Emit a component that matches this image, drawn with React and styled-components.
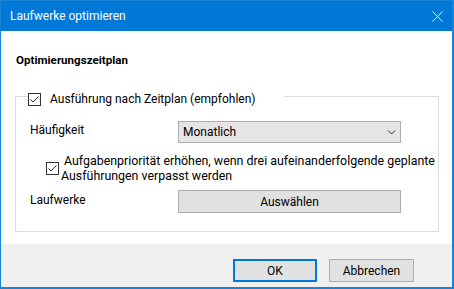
import React from 'react'
import styled, { createGlobalStyle } from 'styled-components'

const GlobalStyle = createGlobalStyle`
  html, body {
    margin: 0;
    padding: 0;
    background: #ffffff;
  }
  body {
    font-family: Roboto, "Noto Sans", sans-serif;
    font-size: 12px;
    color: #000000;
  }
`

const Window = styled.div`
  width: 454px;
  height: 289px;
  box-sizing: border-box;
  border: 1px solid #1883d7;
  border-right-width: 2px;
  border-bottom-width: 2px;
  display: flex;
  flex-direction: column;
  background: #ffffff;
`

const TitleBar = styled.div`
  height: 30px;
  flex: none;
  background: #0078d7;
  color: #ffffff;
  display: flex;
  align-items: center;
  justify-content: space-between;
  padding-left: 9px;
  font-size: 12px;
`

const CloseButton = styled.div`
  width: 46px;
  height: 30px;
  display: flex;
  align-items: center;
  justify-content: center;
  margin-right: -8px;
`

const Body = styled.div`
  flex: 1;
  padding: 0 13px 0 14px;
  display: flex;
  flex-direction: column;
`

const SectionTitle = styled.div`
  font-weight: bold;
  font-size: 11.6px;
  line-height: 16px;
  margin-top: 21px;
  margin-left: 1px;
`

const GroupBox = styled.fieldset`
  margin: 18px 0 0 0;
  padding: 14px 14px 18px 14px;
  border: 1px solid #dcdcdc;
  min-inline-size: auto;
  display: flex;
  flex-direction: column;
`

const Legend = styled.legend`
  padding: 5px 28px 0 0;
  margin-left: -2px;
  display: flex;
  align-items: center;
  gap: 9px;
  line-height: 16px;
`

const FieldRow = styled.div`
  display: grid;
  grid-template-columns: 148px 223px;
  align-items: start;
  margin-top: ${(p) => p.$top || 0}px;
`

const FieldLabel = styled.div`
  padding-top: ${(p) => p.$pad || 1}px;
  line-height: 16px;
`

const Combo = styled.div`
  height: 22px;
  box-sizing: border-box;
  background: #e5e5e5;
  border: 1px solid #adadad;
  display: flex;
  align-items: center;
  justify-content: space-between;
  padding: 0 4px 0 4px;
`

const PushButton = styled.div`
  height: 23px;
  width: ${(p) => p.$w || 'auto'};
  box-sizing: border-box;
  background: #e1e1e1;
  border: ${(p) => (p.$default ? '2px solid #0078d7' : '1px solid #adadad')};
  display: flex;
  align-items: center;
  justify-content: center;
  line-height: 16px;
`

const CheckRow = styled.div`
  display: flex;
  align-items: center;
  gap: 2px;
  margin-top: 10px;
  padding-left: 16px;
`

const CheckText = styled.div`
  line-height: 15px;
  font-size: 12.4px;
  white-space: nowrap;
`

const FirstLine = styled.div`
  padding-left: 3px;
`

const Box = styled.span`
  width: 13px;
  height: 13px;
  box-sizing: border-box;
  border: 1px solid #333333;
  background: #ffffff;
  flex: none;
  display: flex;
  align-items: center;
  justify-content: center;
`

const Footer = styled.div`
  height: 43px;
  flex: none;
  background: #f0f0f0;
  display: flex;
  justify-content: flex-end;
  align-items: flex-start;
  gap: 12px;
  padding: 15px 38px 0 0;
  box-sizing: border-box;
`

const CheckBox = () => (
  <Box>
    <svg width="11" height="11" viewBox="0 0 11 11">
      <path d="M1.5 5.5 L4 8 L9.5 2.5" fill="none" stroke="#333" strokeWidth="1" />
    </svg>
  </Box>
)

const App = () => (
  <>
    <GlobalStyle />
    <Window>
      <TitleBar>
        <span>Laufwerke optimieren</span>
        <CloseButton>
          <svg width="11" height="11" viewBox="0 0 11 11">
            <path d="M0.5 0.5 L10.5 10.5 M10.5 0.5 L0.5 10.5" stroke="#fff" strokeWidth="1" />
          </svg>
        </CloseButton>
      </TitleBar>
      <Body>
        <SectionTitle>Optimierungszeitplan</SectionTitle>
        <GroupBox>
          <Legend>
            <CheckBox />
            <span>Ausführung nach Zeitplan (empfohlen)</span>
          </Legend>
          <FieldRow>
            <FieldLabel>Häufigkeit</FieldLabel>
            <Combo>
              <span>Monatlich</span>
              <svg width="9" height="5" viewBox="0 0 9 5">
                <path d="M1 0.5 L4.5 4 L8 0.5" fill="none" stroke="#333" strokeWidth="1" />
              </svg>
            </Combo>
          </FieldRow>
          <CheckRow>
            <CheckBox />
            <CheckText>
              <FirstLine>Aufgabenpriorität erhöhen, wenn drei aufeinanderfolgende geplante</FirstLine>
              <div>Ausführungen verpasst werden</div>
            </CheckText>
          </CheckRow>
          <FieldRow $top={7}>
            <FieldLabel $pad={2}>Laufwerke</FieldLabel>
            <PushButton>Auswählen</PushButton>
          </FieldRow>
        </GroupBox>
      </Body>
      <Footer>
        <PushButton $default $w="84px">OK</PushButton>
        <PushButton $w="85px">Abbrechen</PushButton>
      </Footer>
    </Window>
  </>
)

export default App
